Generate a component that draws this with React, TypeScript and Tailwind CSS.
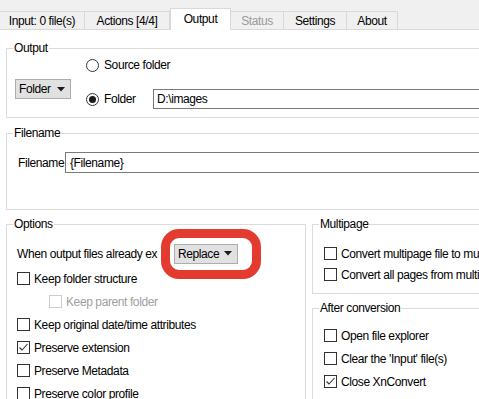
import React from "react";

const font = { fontFamily: '"Liberation Sans", Arial, sans-serif' };

function Check({ checked = false, disabled = false, label }: { checked?: boolean; disabled?: boolean; label: string }) {
  return (
    <div className="flex items-center h-[23px] whitespace-nowrap">
      <div
        className={`w-[13px] h-[13px] border bg-white flex items-center justify-center ${disabled ? "border-[#cccccc]" : "border-[#333333]"}`}
      >
        {checked && (
          <svg width="11" height="11" viewBox="0 0 11 11">
            <polyline points="1.5,5.5 4,8 9.5,2" fill="none" stroke="#333333" strokeWidth="1.1" />
          </svg>
        )}
      </div>
      <span className={`ml-[4px] ${disabled ? "text-[#a0a0a0]" : "text-black"}`}>{label}</span>
    </div>
  );
}

function Radio({ checked = false }: { checked?: boolean }) {
  return (
    <div className="w-[13px] h-[13px] rounded-full border border-[#333333] bg-white flex items-center justify-center shrink-0">
      {checked && <div className="w-[7px] h-[7px] rounded-full bg-[#1a1a1a]" />}
    </div>
  );
}

function Combo({ label, w }: { label: string; w: string }) {
  return (
    <div className={`${w} h-[20px] bg-[#e1e1e1] border border-[#adadad] flex items-center justify-between pl-[3px] pr-[5px]`}>
      <span>{label}</span>
      <svg width="8" height="5" viewBox="0 0 8 5">
        <polygon points="0,0 8,0 4,4.5" fill="#1a1a1a" />
      </svg>
    </div>
  );
}

function Group({ title, className, children }: { title: string; className: string; children?: React.ReactNode }) {
  return (
    <div className={`relative border border-[#dcdcdc] ${className}`}>
      <span className="absolute -top-[9px] left-[6px] bg-white px-[1px] leading-[16px]">{title}</span>
      {children}
    </div>
  );
}

export default function App() {
  const tabs = [
    { t: "Input: 0 file(s)", w: "w-[85px]" },
    { t: "Actions [4/4]", w: "w-[85px]" },
    { t: "Output", w: "w-[61px]", sel: true },
    { t: "Status", w: "w-[53px]", dis: true },
    { t: "Settings", w: "w-[63px]" },
    { t: "About", w: "w-[51px]" },
  ];
  return (
    <div
      className="w-[479px] h-[399px] overflow-hidden bg-white text-[12px] tracking-[-0.4px] text-black leading-[16px]"
      style={font}
    >
      {/* tab strip */}
      <div className="h-[30px] bg-[#f0f0f0] border-b border-[#d9d9d9] flex items-end">
        {tabs.map((tab) =>
          tab.sel ? (
            <div
              key={tab.t}
              className={`${tab.w} h-[22px] -mb-[1px] bg-white border-t border-l border-r border-[#d9d9d9] flex items-center justify-center pb-[2px] relative z-10`}
            >
              {tab.t}
            </div>
          ) : (
            <div
              key={tab.t}
              className={`${tab.w} h-[18px] border-t border-r border-[#d9d9d9] flex items-center justify-center ${tab.dis ? "text-[#9a9a9a]" : ""}`}
            >
              {tab.t}
            </div>
          )
        )}
      </div>

      <div className="pl-[6px] w-[520px]">
        {/* Output group */}
        <Group title="Output" className="mt-[18px] h-[70px] w-[510px]">
          <div className="flex pl-[8px]">
            <div className="mt-[30px]">
              <Combo label="Folder" w="w-[56px]" />
            </div>
            <div className="ml-[15px] pt-[8px] flex flex-col">
              <div className="flex items-center h-[16px]">
                <Radio />
                <span className="ml-[5px]">Source folder</span>
              </div>
              <div className="flex items-center h-[20px] mt-[16px]">
                <Radio checked />
                <span className="ml-[5px] w-[49px]">Folder</span>
                <div className="w-[400px] h-[20px] border border-[#7a7a7a] flex items-center pl-[3px]">D:\images</div>
              </div>
            </div>
          </div>
        </Group>

        {/* Filename group */}
        <Group title="Filename" className="mt-[15px] h-[77px] w-[510px]">
          <div className="flex items-center pl-[11px] mt-[18px]">
            <span className="w-[47px]">Filename</span>
            <div className="w-[450px] h-[21px] border border-[#7a7a7a] flex items-center pl-[4px]">{"{Filename}"}</div>
          </div>
        </Group>

        <div className="flex mt-[14px] gap-[6px] items-start">
          {/* Options */}
          <Group title="Options" className="w-[300px] h-[200px] shrink-0">
            <div className="pl-[10px]">
              <div className="flex items-center mt-[18px] h-[21px]">
                <span className="w-[145px] whitespace-nowrap">When output files already ex</span>
                <div className="relative ml-[12px]">
                  <Combo label="Replace" w="w-[64px]" />
                  <div className="absolute -left-[13px] -top-[15px] w-[100px] h-[50px] border-[9px] border-[#e43b30] rounded-[18px]" />
                </div>
              </div>
              <div className="mt-[3px]">
                <Check label="Keep folder structure" />
                <div className="pl-[32px]">
                  <Check label="Keep parent folder" disabled />
                </div>
                <Check label="Keep original date/time attributes" />
                <Check label="Preserve extension" checked />
                <Check label="Preserve Metadata" />
                <Check label="Preserve color profile" />
              </div>
            </div>
          </Group>

          <div className="flex flex-col w-[200px] shrink-0">
            <Group title="Multipage" className="h-[70px]">
              <div className="pl-[11px] mt-[18px] flex flex-col">
                <div className="h-[21px] flex items-center">
                  <Check label="Convert multipage file to multiple files" />
                </div>
                <div className="h-[21px] flex items-center">
                  <Check label="Convert all pages from multipage file" />
                </div>
              </div>
            </Group>
            <Group title="After conversion" className="mt-[14px] h-[120px]">
              <div className="pl-[11px] mt-[15px]">
                <Check label="Open file explorer" />
                <Check label="Clear the 'Input' file(s)" />
                <Check label="Close XnConvert" checked />
              </div>
            </Group>
          </div>
        </div>
      </div>
    </div>
  );
}
